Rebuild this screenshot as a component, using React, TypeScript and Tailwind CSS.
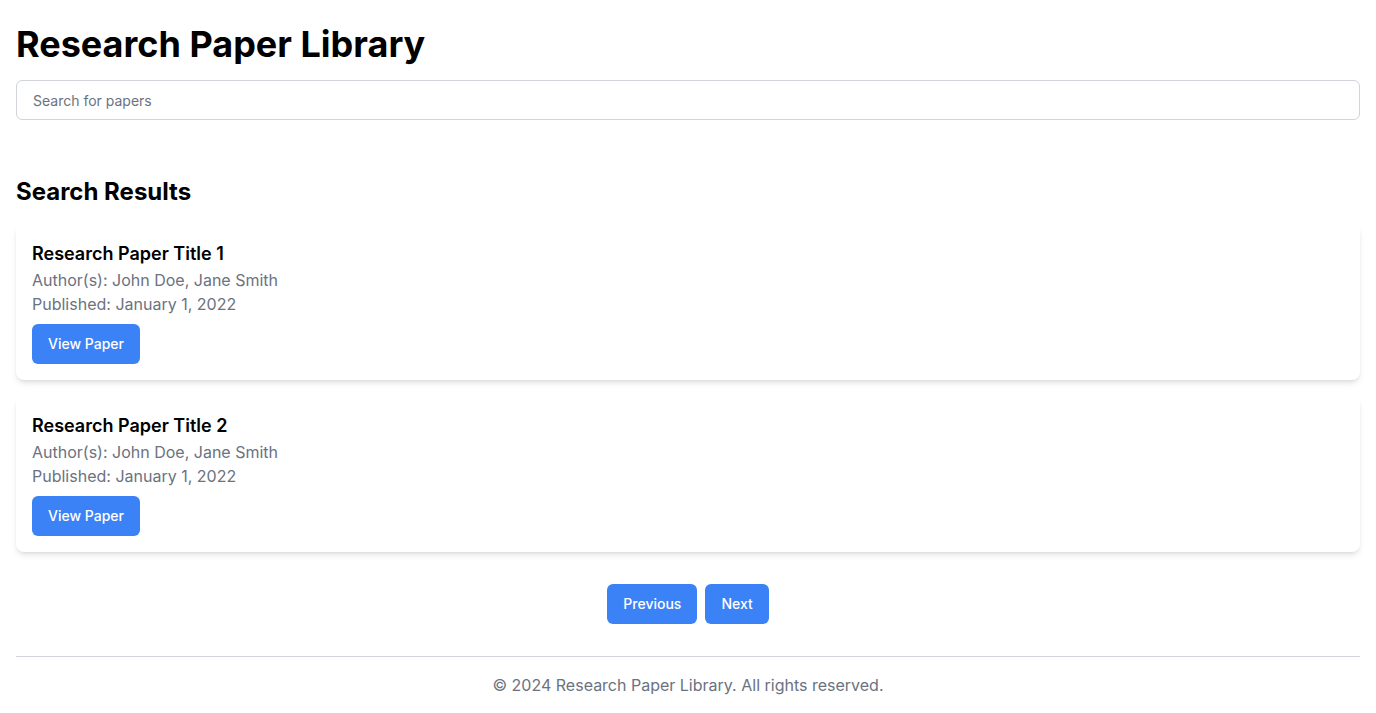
import { useState } from "react";

const papers = [
  { id: 1, title: "Research Paper Title 1", authors: "John Doe, Jane Smith", published: "January 1, 2022" },
  { id: 2, title: "Research Paper Title 2", authors: "John Doe, Jane Smith", published: "January 1, 2022" },
];

export default function App() {
  const [query, setQuery] = useState("");

  return (
    <div className="min-h-screen bg-white px-4 pt-6 pb-4 text-black" style={{ fontFamily: "Inter, 'Noto Sans', sans-serif" }}>
      <h1 className="text-4xl font-bold mb-4">Research Paper Library</h1>

      <input
        type="text"
        value={query}
        onChange={(e) => setQuery(e.target.value)}
        placeholder="Search for papers"
        className="w-full h-10 px-4 text-sm border border-[#d1d5db] rounded-md placeholder:text-[#6b7280] focus:outline-none"
      />

      {/* Results */}
      <h2 className="text-2xl font-bold mt-14 mb-4">Search Results</h2>
      <div className="space-y-4">
        {papers.map((paper) => (
          <div key={paper.id} className="bg-white rounded-lg shadow-md p-4">
            <h3 className="text-lg font-semibold">{paper.title}</h3>
            <p className="text-[#6b7280]">Author(s): {paper.authors}</p>
            <p className="text-[#6b7280]">Published: {paper.published}</p>
            <button className="mt-2 px-4 py-2.5 text-sm leading-5 font-medium text-white bg-[#3b82f6] rounded-md hover:bg-[#2563eb]">
              View Paper
            </button>
          </div>
        ))}
      </div>

      {/* Pagination */}
      <div className="flex justify-center gap-2 mt-8">
        <button className="px-4 py-2.5 text-sm leading-5 font-medium text-white bg-[#3b82f6] rounded-md">Previous</button>
        <button className="px-4 py-2.5 text-sm leading-5 font-medium text-white bg-[#3b82f6] rounded-md">Next</button>
      </div>

      <footer className="mt-8 border-t border-[#d1d5db] pt-4 text-center text-[#6b7280]">
        © 2024 Research Paper Library. All rights reserved.
      </footer>
    </div>
  );
}
